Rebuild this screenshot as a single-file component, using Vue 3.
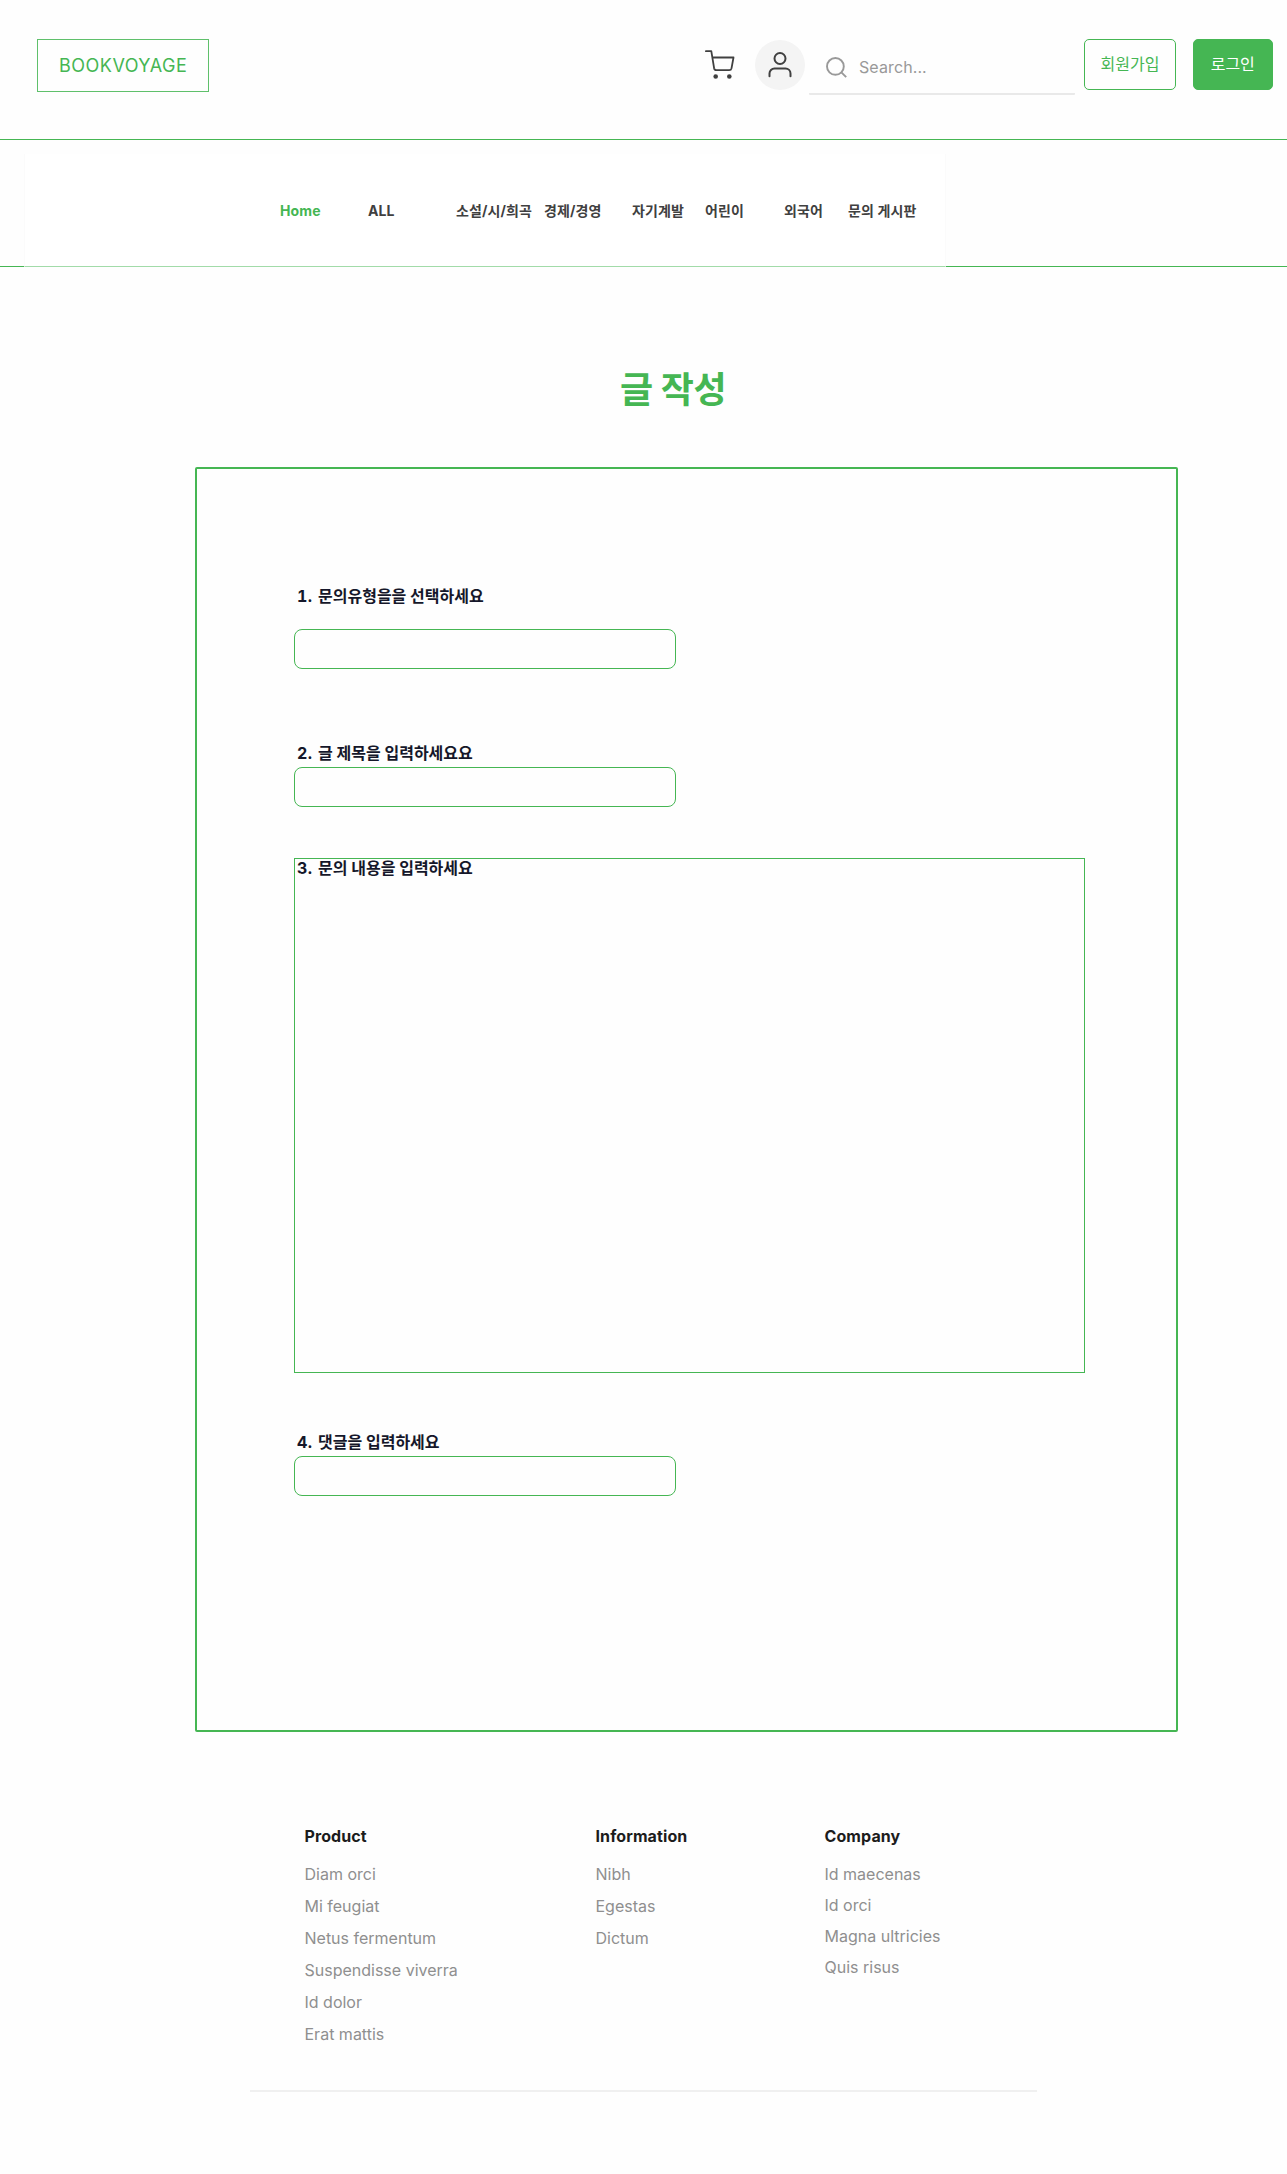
<script setup>
const categories = [
  { label: 'Home', width: 88, active: true },
  { label: 'ALL', width: 88 },
  { label: '소설/시/희곡', width: 88 },
  { label: '경제/경영', width: 88 },
  { label: '자기계발', width: 73 },
  { label: '어린이', width: 79 },
  { label: '외국어', width: 64 },
  { label: '문의 게시판', width: 74 }
]

const footerColumns = [
  {
    title: 'Product',
    key: 'product',
    links: ['Diam orci', 'Mi feugiat', 'Netus fermentum', 'Suspendisse viverra', 'Id dolor', 'Erat mattis']
  },
  { title: 'Information', key: 'information', links: ['Nibh', 'Egestas', 'Dictum'] },
  { title: 'Company', key: 'company', links: ['Id maecenas', 'Id orci', 'Magna ultricies', 'Quis risus'] }
]
</script>

<template>
  <div class="page">
    <header class="topbar">
      <a class="logo">BOOKVOYAGE</a>
      <div class="tools">
        <svg class="cart" width="30" height="30" viewBox="0 0 30 30" fill="none">
          <path
            d="M.9 1.2H6.3L9.1 18.2Q9.5 20.2 11.5 20.2H24.2Q26.1 20.2 26.5 18.4L28.5 7.5H7.4"
            stroke="#404040"
            stroke-width="1.8"
            stroke-linecap="round"
            stroke-linejoin="round"
          />
          <circle cx="10.7" cy="26.5" r="2.3" fill="#404040" />
          <circle cx="24.3" cy="26.5" r="2.3" fill="#404040" />
        </svg>
        <span class="avatar">
          <svg width="24" height="26" viewBox="0 0 24 26" fill="none" stroke="#404040" stroke-width="2" stroke-linecap="round">
            <circle cx="12" cy="6.5" r="5.5" />
            <path d="M1.5 24.3V21.5A5 5 0 0 1 6.5 16.5H17.5A5 5 0 0 1 22.5 21.5V24.3" />
          </svg>
        </span>
        <label class="search">
          <svg width="21" height="21" viewBox="0 0 21 21" fill="none" stroke="#999" stroke-width="1.9">
            <circle cx="9.4" cy="9.4" r="8.4" />
            <path d="M15.4 15.4L20.2 20.2" />
          </svg>
          <span>Search...</span>
        </label>
        <button class="btn signup">회원가입</button>
        <button class="btn login">로그인</button>
      </div>
    </header>

    <nav class="navbar">
      <div class="nav-panel">
        <a
          v-for="item in categories"
          :key="item.label"
          :class="{ active: item.active }"
          :style="{ width: item.width + 'px' }"
        >{{ item.label }}</a>
      </div>
    </nav>

    <main>
      <h1>글 작성</h1>
      <form class="card" @submit.prevent>
        <div class="field first">
          <label><span class="num">1.</span>문의유형을을 선택하세요</label>
          <div class="box"></div>
        </div>
        <div class="field second">
          <label><span class="num">2.</span>글 제목을 입력하세요요</label>
          <div class="box"></div>
        </div>
        <div class="content-box">
          <label><span class="num">3.</span>문의 내용을 입력하세요</label>
        </div>
        <div class="field last">
          <label><span class="num">4.</span>댓글을 입력하세요</label>
          <div class="box"></div>
        </div>
      </form>
    </main>

    <footer>
      <section v-for="column in footerColumns" :key="column.key" :class="column.key">
        <h2>{{ column.title }}</h2>
        <ul>
          <li v-for="link in column.links" :key="link">{{ link }}</li>
        </ul>
      </section>
    </footer>
  </div>
</template>

<style>
body {
  margin: 0;
  background: #fefefe;
}
</style>

<style scoped>
.page {
  width: 1287px;
  height: 2174px;
  overflow: hidden;
  font-family: Inter, 'Noto Sans CJK KR', sans-serif;
  color: #404040;
}

.page * {
  box-sizing: border-box;
}

.topbar {
  display: flex;
  justify-content: space-between;
  height: 140px;
  padding: 39px 14.5px 0 37px;
  border-bottom: 1px solid #45b653;
}

.logo {
  width: 172px;
  height: 52.5px;
  padding-left: 21px;
  border: 1px solid #5fc06b;
  color: #45b653;
  font-size: 18px;
  letter-spacing: 0.5px;
  line-height: 51px;
}

.tools {
  display: flex;
  align-items: flex-start;
}

.cart {
  margin: 11px 20px 0 0;
}

.avatar {
  display: flex;
  justify-content: center;
  align-items: center;
  width: 50px;
  height: 50px;
  margin: 1px 4.5px 0 0;
  border-radius: 50%;
  background: #f4f4f4;
}

.search {
  display: flex;
  align-items: center;
  gap: 12px;
  width: 266px;
  height: 56px;
  margin-right: 9px;
  padding: 2px 0 0 17px;
  border-bottom: 2px solid #e9e9e9;
  border-radius: 1px;
  color: #999;
  font-size: 16px;
  letter-spacing: 0.1px;
}

.btn {
  height: 51px;
  padding: 0 0 2px;
  border: 1px solid #45b653;
  border-radius: 5px;
  font: 400 16px/24px Inter, 'Noto Sans CJK KR', sans-serif;
}

.signup {
  width: 92px;
  margin-right: 17px;
  background: none;
  color: #45b653;
}

.login {
  width: 79.5px;
  background: #45b653;
  color: #fff;
}

.navbar {
  height: 127px;
  padding: 14px 0 0 24px;
  border-bottom: 1px solid #45b653;
}

.nav-panel {
  display: flex;
  width: 922px;
  height: 113px;
  padding: 47px 0 0 255px;
  border: 1px solid rgba(248, 248, 248, 0.5);
  border-top: 0;
  border-bottom: 0;
  background: rgba(255, 255, 255, 0.5);
  font-size: 14px;
  font-weight: 700;
  letter-spacing: 0.12px;
  line-height: 20px;
  white-space: nowrap;
}

.nav-panel a {
  flex: none;
}

.nav-panel .active {
  color: #45b653;
}

h1 {
  width: 106px;
  margin: 96px 0 0 620px;
  color: #45b653;
  font-size: 36px;
  font-weight: 700;
  letter-spacing: -0.4px;
  line-height: 54px;
  white-space: nowrap;
}

.card {
  width: 983px;
  height: 1265px;
  margin: 50px 0 0 195px;
  padding: 115px 0 0 97px;
  border: 2px solid #45b653;
  border-radius: 2px;
}

label {
  display: block;
}

.field label,
.content-box label {
  padding-left: 3px;
  color: #15172a;
  font-size: 16px;
  font-weight: 700;
  line-height: 24px;
}

.num {
  display: inline-block;
  width: 21px;
  font-variant-numeric: tabular-nums;
  letter-spacing: 0.4px;
}

.box {
  width: 382px;
  height: 40px;
  border: 1px solid #45b653;
  border-radius: 8px;
}

.first .box {
  margin-top: 21px;
}

.second {
  margin-top: 72px;
}

.second .box,
.last .box {
  margin-top: 2px;
}

.content-box {
  width: 791px;
  height: 515px;
  margin-top: 51px;
  border: 1px solid #45b653;
}

.content-box label {
  margin-top: -3px;
  padding-left: 2px;
}

.last {
  margin-top: 57px;
}

footer {
  display: grid;
  grid-template-columns: 291px 229px 1fr;
  width: 787px;
  height: 268px;
  margin: 92px 0 0 250px;
  padding-left: 54.5px;
  border-bottom: 2px solid #f0f0f0;
}

h2 {
  margin: 0 0 14px;
  color: #1c1c1c;
  font-size: 16px;
  font-weight: 650;
  letter-spacing: 0.1px;
  line-height: 24px;
}

ul {
  margin: 0;
  padding: 0;
  list-style: none;
  color: #8f8f8f;
  font-size: 16px;
  line-height: 24px;
}

li + li {
  margin-top: 8px;
}

.company li + li {
  margin-top: 7px;
}
</style>
